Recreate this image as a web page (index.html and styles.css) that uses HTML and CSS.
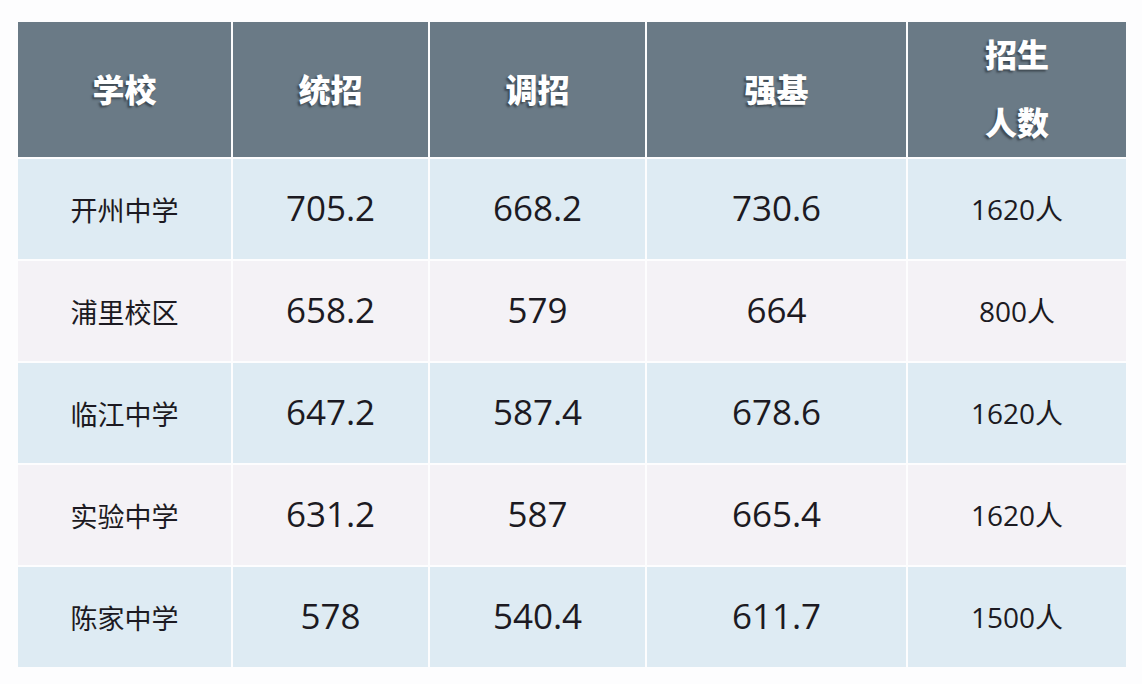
FILE: index.html
```html
<!DOCTYPE html>
<html lang="zh">
<head>
<meta charset="utf-8">
<link rel="stylesheet" href="styles.css">
</head>
<body>
<div class="page">
  <div class="table">
    <div class="cell head">学校</div>
    <div class="cell head">统招</div>
    <div class="cell head">调招</div>
    <div class="cell head">强基</div>
    <div class="cell head two">招生<br>人数</div>

    <div class="cell a name">开州中学</div>
    <div class="cell a num">705.2</div>
    <div class="cell a num">668.2</div>
    <div class="cell a num">730.6</div>
    <div class="cell a cnt">1620人</div>

    <div class="cell b name">浦里校区</div>
    <div class="cell b num">658.2</div>
    <div class="cell b num">579</div>
    <div class="cell b num">664</div>
    <div class="cell b cnt">800人</div>

    <div class="cell a name">临江中学</div>
    <div class="cell a num">647.2</div>
    <div class="cell a num">587.4</div>
    <div class="cell a num">678.6</div>
    <div class="cell a cnt">1620人</div>

    <div class="cell b name">实验中学</div>
    <div class="cell b num">631.2</div>
    <div class="cell b num">587</div>
    <div class="cell b num">665.4</div>
    <div class="cell b cnt">1620人</div>

    <div class="cell a name">陈家中学</div>
    <div class="cell a num">578</div>
    <div class="cell a num">540.4</div>
    <div class="cell a num">611.7</div>
    <div class="cell a cnt">1500人</div>
  </div>
</div>
</body>
</html>
```

FILE: styles.css
```css
html, body {
  margin: 0;
  padding: 0;
  background: #ffffff;
}
.page {
  width: 1142px;
  height: 684px;
  box-sizing: border-box;
  padding: 22px 0 0 18px;
  background: #fdfdfe;
}
.table {
  display: grid;
  grid-template-columns: 213px 195px 215px 259px 218px;
  grid-template-rows: 135px 100px 100px 100px 100px 100px;
  column-gap: 2px;
  row-gap: 2px;
  width: 1108px;
}
.cell {
  display: flex;
  align-items: center;
  justify-content: center;
  text-align: center;
  color: #1c1a22;
}
.head {
  background: #6a7a86;
  color: #ffffff;
  font-family: "Noto Sans CJK SC", sans-serif;
  font-weight: 900;
  font-size: 32px;
  padding-bottom: 4px;
  text-shadow: -2px 2px 2px rgba(30, 35, 40, 0.55);
}
.head.two {
  line-height: 68px;
  padding-bottom: 6px;
}
.a { background: #deebf3; }
.b { background: #f4f2f6; }
.name {
  font-family: "Noto Sans CJK SC", sans-serif;
  font-weight: 400;
  font-size: 27px;
}
.num {
  font-family: "Open Sans", "Noto Sans CJK SC", sans-serif;
  font-size: 35px;
  font-weight: 400;
  padding-bottom: 3px;
}
.cnt {
  font-family: "Open Sans", "Noto Sans CJK SC", sans-serif;
  font-size: 28px;
  font-weight: 400;
  padding-bottom: 2px;
}
```
